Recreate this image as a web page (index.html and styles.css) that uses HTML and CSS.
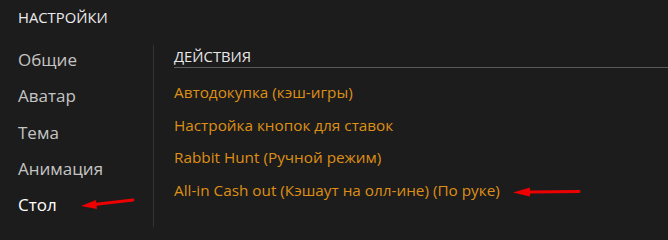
FILE: index.html
```html
<!DOCTYPE html>
<html lang="ru">
<head>
<meta charset="utf-8">
<link rel="stylesheet" href="styles.css">
</head>
<body>
<div class="page">
  <header class="top">НАСТРОЙКИ</header>
  <div class="row">
    <nav class="side">
      <div class="item">Общие</div>
      <div class="item">Аватар</div>
      <div class="item">Тема</div>
      <div class="item">Анимация</div>
      <div class="item active">Стол</div>
    </nav>
    <section class="content">
      <div class="heading">ДЕЙСТВИЯ</div>
      <ul class="links">
        <li>Автодокупка (кэш-игры)</li>
        <li>Настройка кнопок для ставок</li>
        <li>Rabbit Hunt (Ручной режим)</li>
        <li>All-in Cash out (Кэшаут на олл-ине) (По руке)</li>
      </ul>
    </section>
  </div>
  <svg class="arrow arrow-a" width="60" height="16" viewBox="0 0 60 16">
    <path d="M53 3 L14 7.5" stroke="#ee0000" stroke-width="3" stroke-linecap="round" fill="none"/>
    <polygon points="1,9 16,3 17,12" fill="#ee0000"/>
  </svg>
  <svg class="arrow arrow-b" width="72" height="14" viewBox="0 0 72 14">
    <path d="M67 6.5 L18 7" stroke="#ee0000" stroke-width="3" stroke-linecap="round" fill="none"/>
    <polygon points="1,7.5 18,2.5 18,11.5" fill="#ee0000"/>
  </svg>
</div>
</body>
</html>
```
FILE: styles.css
```css
html, body {
  margin: 0;
  padding: 0;
  background: #1c1c1c;
}
.page {
  position: relative;
  width: 668px;
  height: 227px;
  overflow: hidden;
  font-family: "Open Sans", "Noto Sans", sans-serif;
}
.top {
  height: 42px;
  box-sizing: border-box;
  padding: 6px 0 0 18px;
  line-height: 22px;
  font-size: 14.8px;
  color: #ececec;
}
.row {
  display: flex;
  align-items: flex-start;
}
.side {
  width: 135px;
  padding-left: 18px;
  flex: none;
}
.item {
  height: 36.25px;
  line-height: 36px;
  font-size: 17px;
  color: #c4c4c4;
}
.item.active {
  color: #ffffff;
}
.content {
  flex: 1;
  margin-top: 3px;
  border-left: 1px solid #333333;
  padding-left: 20px;
  height: 182px;
}
.heading {
  height: 22px;
  line-height: 22px;
  font-size: 14.8px;
  color: #e8e8e8;
  border-bottom: 1px solid #5a5a5a;
}
.links {
  list-style: none;
  margin: 0;
  padding: 8px 0 0 0;
}
.links li {
  height: 32.5px;
  line-height: 32px;
  font-size: 15.3px;
  color: #de8f16;
}
.arrow {
  position: absolute;
}
.arrow-a {
  left: 80px;
  top: 197px;
}
.arrow-b {
  left: 512px;
  top: 185px;
}
```
